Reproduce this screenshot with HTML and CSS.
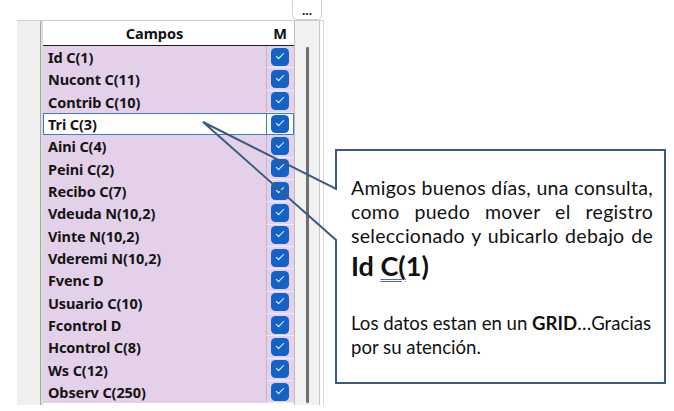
FILE: index.html
```html
<!DOCTYPE html>
<html>
<head>
<meta charset="utf-8">
<link rel="stylesheet" href="styles.css">
</head>
<body>
<div class="app">
  <div class="topbar">
    <div class="topspace"></div>
    <div class="dots">...</div>
  </div>
  <div class="main">
    <div class="gutter"></div>
    <div class="panel">
      <div class="side"></div>
      <div class="grid">
        <div class="head">
          <div class="hname">Campos</div>
          <div class="hm">M</div>
        </div>
        <div class="row"><div class="name">Id C(1)</div><div class="m"><span class="cb"></span></div></div>
        <div class="row"><div class="name">Nucont C(11)</div><div class="m"><span class="cb"></span></div></div>
        <div class="row"><div class="name">Contrib C(10)</div><div class="m"><span class="cb"></span></div></div>
        <div class="row sel"><div class="name">Tri C(3)</div><div class="m"><span class="cb"></span></div></div>
        <div class="row"><div class="name">Aini C(4)</div><div class="m"><span class="cb"></span></div></div>
        <div class="row"><div class="name">Peini C(2)</div><div class="m"><span class="cb"></span></div></div>
        <div class="row"><div class="name">Recibo C(7)</div><div class="m"><span class="cb"></span></div></div>
        <div class="row"><div class="name">Vdeuda N(10,2)</div><div class="m"><span class="cb"></span></div></div>
        <div class="row"><div class="name">Vinte N(10,2)</div><div class="m"><span class="cb"></span></div></div>
        <div class="row"><div class="name">Vderemi N(10,2)</div><div class="m"><span class="cb"></span></div></div>
        <div class="row"><div class="name">Fvenc D</div><div class="m"><span class="cb"></span></div></div>
        <div class="row"><div class="name">Usuario C(10)</div><div class="m"><span class="cb"></span></div></div>
        <div class="row"><div class="name">Fcontrol D</div><div class="m"><span class="cb"></span></div></div>
        <div class="row"><div class="name">Hcontrol C(8)</div><div class="m"><span class="cb"></span></div></div>
        <div class="row"><div class="name">Ws C(12)</div><div class="m"><span class="cb"></span></div></div>
        <div class="row"><div class="name">Observ C(250)</div><div class="m"><span class="cb"></span></div></div>
      </div>
      <div class="scroll"><div class="thumb"></div></div>
      <div class="edge"></div>
    </div>
  </div>

  <svg class="callout" width="674" height="411" viewBox="0 0 674 411">
    <path d="M336,189 L336,150 L665,150 L665,383 L336,383 L336,240 L203,122 Z" fill="none" stroke="#3b5a80" stroke-width="2" stroke-linejoin="miter"/>
  </svg>
  <div class="note">
    <p class="p1">Amigos buenos días, una consulta,<br>como puedo mover el registro<br>seleccionado y ubicarlo debajo de</p>
    <p class="big">Id <span class="wavy">C(</span>1)</p>
    <p class="p2">Los datos estan en un <b>GRID</b>…Gracias<br>por su atención.</p>
  </div>
</div>
</body>
</html>
```

FILE: styles.css
```css
html, body {
  margin: 0;
  padding: 0;
  background: #fff;
}
body {
  width: 674px;
  height: 411px;
  overflow: hidden;
  font-family: "Noto Sans", sans-serif;
}
.app {
  position: relative;
  width: 674px;
  height: 411px;
}
.topbar {
  display: flex;
  height: 20px;
}
.topspace {
  width: 292px;
}
.dots {
  width: 30px;
  height: 20px;
  box-sizing: border-box;
  border: 1px solid #cfcfcf;
  border-top: none;
  border-radius: 0 0 5px 5px;
  font-size: 12px;
  font-weight: 700;
  line-height: 22px;
  text-align: center;
  color: #111;
}
.main {
  display: flex;
  height: 385px;
}
.gutter {
  width: 17px;
}
.panel {
  display: flex;
  border-top: 1px solid #cdcdcd;
  height: 384px;
}
.side {
  width: 23px;
  background: #f0f0f0;
}
.grid {
  width: 251px;
  border-left: 1px solid #a6a6a6;
  box-shadow: inset 2px 0 0 #dedede;
  padding-left: 2px;
  background: #fff;
}
.head {
  display: flex;
  height: 24px;
  border-bottom: 1px solid #1e1e1e;
  font-weight: 700;
  font-size: 14.5px;
  color: #111;
  line-height: 25px;
}
.hname {
  width: 223px;
  text-align: center;
}
.hm {
  width: 28px;
  text-align: center;
}
.row {
  display: flex;
  height: 22.33px;
  background: #e4d1e9;
  box-sizing: border-box;
}
.name {
  width: 223px;
  padding-left: 5px;
  box-sizing: border-box;
  font-weight: 700;
  font-size: 14.5px;
  line-height: 22px;
  color: #141414;
  white-space: nowrap;
  letter-spacing: -0.1px;
}
.m {
  width: 28px;
  box-sizing: border-box;
  border-left: 1px solid #c4b6c8;
  border-bottom: 1px solid #f1e9f3;
  display: flex;
  align-items: center;
  padding-left: 4px;
}
.cb {
  position: relative;
  width: 18px;
  height: 18px;
  border-radius: 4.5px;
  background: #1462c6;
}
.cb::after {
  content: "";
  position: absolute;
  left: 5px;
  top: 5px;
  width: 7px;
  height: 3px;
  border-left: 1.4px solid #fff;
  border-bottom: 1.4px solid #fff;
  transform: rotate(-45deg);
}
.row.sel {
  background: #fff;
  box-shadow: inset 0 0 0 1px #3b7bc8;
}
.row.sel .m {
  border-left: 1px solid #3b7bc8;
  border-bottom: none;
}
.scroll {
  width: 25px;
  border-left: 1px solid #bdbdbd;
  background: #f1f1f1;
  display: flex;
  justify-content: center;
  padding-top: 26px;
  box-sizing: border-box;
}
.thumb {
  width: 3px;
  height: 356px;
  background: #6f6f6f;
  border-radius: 1px;
}
.edge {
  width: 3px;
  border-left: 1px solid #c6c6c6;
  border-right: 1px solid #dadada;
  background: #fff;
}
.callout {
  position: absolute;
  left: 0;
  top: 0;
  pointer-events: none;
}
.note {
  position: absolute;
  left: 351px;
  top: 176px;
  width: 302px;
  font-family: Lato, "Noto Sans", sans-serif;
  color: #111;
}
.note p {
  margin: 0;
}
.note .p1 {
  font-size: 19.5px;
  letter-spacing: 0.3px;
  line-height: 24px;
  text-align: justify;
  text-align-last: justify;
}
.note .big {
  margin-top: 1px;
  font-size: 27px;
  font-weight: 700;
  line-height: 34px;
}
.wavy {
  text-decoration-line: underline;
  text-decoration-style: double;
  text-decoration-color: #4a6bc8;
  text-decoration-thickness: 1px;
  text-underline-offset: 3px;
}
.note .p2 {
  margin-top: 28px;
  font-size: 18.6px;
  letter-spacing: 0;
  line-height: 24px;
  white-space: nowrap;
}
```
